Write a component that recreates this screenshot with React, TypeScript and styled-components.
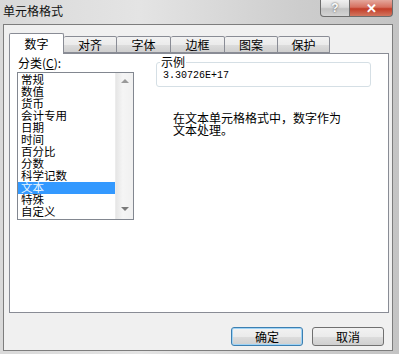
import React from 'react';
import styled, { createGlobalStyle, css } from 'styled-components';

const GlobalStyle = createGlobalStyle`
  html, body {
    margin: 0;
    padding: 0;
    background: #d6d6d6;
  }
  body {
    font-family: "Noto Sans CJK SC", "Liberation Sans", sans-serif;
    font-size: 12px;
    color: #000;
  }
`;

const CJK = `"Noto Sans CJK SC", "Liberation Sans", sans-serif`;
const LIST_FONT = `"Liberation Sans", "Noto Sans CJK SC", sans-serif`;

const Window = styled.div`
  width: 399px;
  height: 354px;
  display: flex;
  flex-direction: column;
  background: linear-gradient(to right, #d9d9d9 0%, #e4e4e4 35%, #cdcdcd 75%, #c4c4c4 100%);
  overflow: hidden;
`;

const TitleBar = styled.div`
  height: 24px;
  display: flex;
  align-items: flex-start;
  flex-shrink: 0;
`;

const Title = styled.div`
  font-family: ${CJK};
  font-size: 12px;
  line-height: 14px;
  padding: 4px 0 0 3px;
  flex: 1;
  color: #111;
`;

const CaptionButtons = styled.div`
  display: flex;
  margin-right: 6px;
`;

const CaptionButton = styled.div<{ $close?: boolean }>`
  height: 16px;
  display: flex;
  align-items: center;
  justify-content: center;
  border: 1px solid #6d6d6d;
  border-top: none;
  font-family: "Liberation Sans", sans-serif;
  font-weight: bold;
  ${(p) =>
    p.$close
      ? css`
          width: 42px;
          border-left: none;
          border-radius: 0 0 4px 0;
          background: linear-gradient(#e4a79c 0%, #d6705f 45%, #c33d28 55%, #d2765f 100%);
          color: #fff;
          font-size: 13px;
        `
      : css`
          width: 28px;
          border-radius: 0 0 0 4px;
          background: linear-gradient(#f0f0f0 0%, #dadada 45%, #c2c2c2 55%, #d4d4d4 100%);
          color: #fafafa;
          font-size: 12px;
          text-shadow: 0 0 2px #444;
        `}
`;

const Client = styled.div`
  flex: 1;
  margin: 0 6px 3px 3px;
  border: 1px solid #7d7d7d;
  background: #f0f0f0;
  display: flex;
  flex-direction: column;
  padding: 8px 3px 0 5px;
`;

const TabRow = styled.div`
  display: flex;
  align-items: flex-end;
  height: 20px;
  position: relative;
  z-index: 1;
`;

const Tab = styled.div<{ $active?: boolean; $w: number }>`
  width: ${(p) => p.$w}px;
  box-sizing: border-box;
  border: 1px solid #898c95;
  border-radius: 2px 2px 0 0;
  font-family: ${CJK};
  font-size: 12px;
  display: flex;
  justify-content: center;
  ${(p) =>
    p.$active
      ? css`
          height: 21px;
          margin-bottom: -1px;
          border-bottom: none;
          background: #fff;
          align-items: center;
          padding-bottom: 1px;
        `
      : css`
          height: 17px;
          border-left: none;
          background: linear-gradient(#f2f2f2 0%, #ebebeb 50%, #dddddd 51%, #cfcfcf 100%);
          align-items: center;
        `}
`;

const Panel = styled.div`
  height: 256px;
  border: 1px solid #898c95;
  background: #fff;
  display: grid;
  grid-template-columns: 117px 215px;
  align-items: start;
  column-gap: 22px;
  padding: 2px 0 0 7px;
`;

const LeftCol = styled.div`
  display: flex;
  flex-direction: column;
`;

const FieldLabel = styled.div`
  font-family: ${CJK};
  font-size: 12px;
  line-height: 14px;
  height: 16px;
  padding-left: 1px;
`;

const ListBox = styled.div`
  height: 146px;
  border: 1px solid #828790;
  display: flex;
  background: #fff;
`;

const Items = styled.div`
  flex: 1;
  padding-top: 1px;
`;

const Item = styled.div<{ $selected?: boolean }>`
  font-family: ${LIST_FONT};
  font-size: 11.5px;
  line-height: 12px;
  height: 12px;
  padding-left: 3px;
  white-space: nowrap;
  ${(p) =>
    p.$selected &&
    css`
      background: #3399ff;
      color: #e8f6ff;
    `}
`;

const ScrollBar = styled.div`
  width: 17px;
  background: linear-gradient(to right, #e6e6e6, #f5f5f5 40%, #f0f0f0);
  border-left: 1px solid #ececec;
  display: flex;
  flex-direction: column;
  justify-content: space-between;
  align-items: center;
  padding: 6px 0 8px;
`;

const Arrow = styled.div<{ $down?: boolean }>`
  width: 0;
  height: 0;
  border-left: 4px solid transparent;
  border-right: 4px solid transparent;
  ${(p) =>
    p.$down
      ? css`border-top: 4px solid #7a7a7a;`
      : css`border-bottom: 4px solid #9a9a9a;`}
`;

const RightCol = styled.div`
  display: flex;
  flex-direction: column;
`;

const GroupBox = styled.fieldset`
  margin: 0;
  height: 31px;
  box-sizing: border-box;
  border: 1px solid #d5dfe5;
  border-radius: 3px;
  padding: 0 0 0 6px;
`;

const Legend = styled.legend`
  font-family: ${CJK};
  font-size: 12px;
  line-height: 12px;
  padding: 0 1px;
  margin-left: -3px;
`;

const Sample = styled.div`
  font-family: "Liberation Mono", monospace;
  font-size: 10px;
  line-height: 12px;
  margin-top: 2px;
`;

const Description = styled.div`
  font-family: ${CJK};
  font-size: 12px;
  line-height: 12px;
  margin: 25px 0 0 17px;
  width: 170px;
`;

const ButtonRow = styled.div`
  display: flex;
  justify-content: flex-end;
  gap: 9px;
  padding: 14px 5px 0 0;
`;

const Button = styled.button<{ $default?: boolean }>`
  width: 72px;
  height: 19px;
  padding: 0;
  border-radius: 3px;
  border: 1px solid ${(p) => (p.$default ? '#3c7fb1' : '#707070')};
  background: linear-gradient(#f2f2f2 0%, #ebebeb 50%, #dddddd 51%, #cfcfcf 100%);
  font-family: ${CJK};
  font-size: 12px;
  line-height: 15px;
  color: #000;
  ${(p) => p.$default && css`box-shadow: inset 0 0 0 1px #9fd3f5;`}
`;

const categories = ['常规', '数值', '货币', '会计专用', '日期', '时间', '百分比', '分数', '科学记数', '文本', '特殊', '自定义'];

const tabs = [
  { label: '数字', w: 55 },
  { label: '对齐', w: 53 },
  { label: '字体', w: 54 },
  { label: '边框', w: 54 },
  { label: '图案', w: 53 },
  { label: '保护', w: 52 },
];

export default function App() {
  return (
    <>
      <GlobalStyle />
      <Window>
        <TitleBar>
          <Title>单元格格式</Title>
          <CaptionButtons>
            <CaptionButton>?</CaptionButton>
            <CaptionButton $close>✕</CaptionButton>
          </CaptionButtons>
        </TitleBar>
        <Client>
          <TabRow>
            {tabs.map((t, i) => (
              <Tab key={t.label} $w={t.w} $active={i === 0}>
                {t.label}
              </Tab>
            ))}
          </TabRow>
          <Panel>
            <LeftCol>
              <FieldLabel>
                分类(<u>C</u>):
              </FieldLabel>
              <ListBox>
                <Items>
                  {categories.map((c) => (
                    <Item key={c} $selected={c === '文本'}>
                      {c}
                    </Item>
                  ))}
                </Items>
                <ScrollBar>
                  <Arrow />
                  <Arrow $down />
                </ScrollBar>
              </ListBox>
            </LeftCol>
            <RightCol>
              <GroupBox>
                <Legend>示例</Legend>
                <Sample>3.30726E+17</Sample>
              </GroupBox>
              <Description>在文本单元格格式中，数字作为文本处理。</Description>
            </RightCol>
          </Panel>
          <ButtonRow>
            <Button $default>确定</Button>
            <Button>取消</Button>
          </ButtonRow>
        </Client>
      </Window>
    </>
  );
}
